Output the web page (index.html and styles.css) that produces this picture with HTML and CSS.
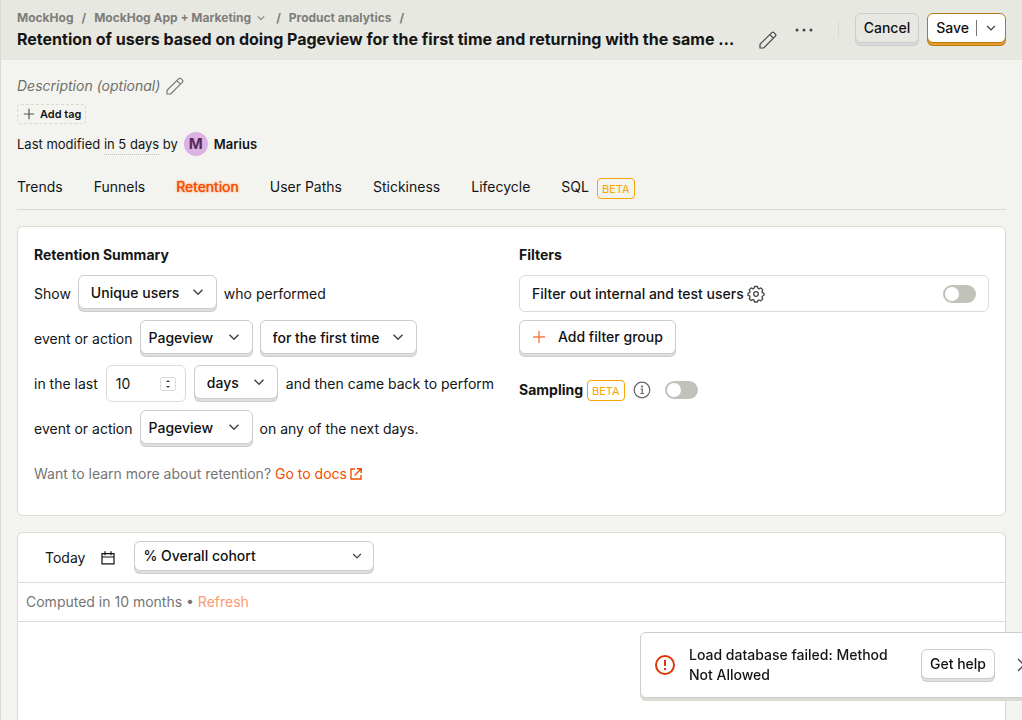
FILE: index.html
```html
<!DOCTYPE html>
<html lang="en">
<head>
<meta charset="utf-8">
<meta name="viewport" content="width=device-width, initial-scale=1">
<title>Retention insight • MockHog</title>
<link rel="stylesheet" href="styles.css">
</head>
<body>
<svg class="sprite" aria-hidden="true">
  <symbol id="chevron" viewBox="0 0 14 14"><path d="M2.500 4.700 7 9.200 11.500 4.700" fill="none" stroke="currentColor" stroke-width="1.500"/></symbol>
  <symbol id="pencil" viewBox="0 0 18 18"><path d="M1 17v-3.800L12.800 1.600a1.500 1.500 0 0 1 2.100 0l1.500 1.500a1.500 1.500 0 0 1 0 2.100L4.800 17H1ZM10.800 3.600l3.600 3.600" fill="none" stroke="currentColor" stroke-width="1.200"/></symbol>
  <symbol id="plus" viewBox="0 0 14 14"><path d="M7 1v12M1 7h12" fill="none" stroke="currentColor" stroke-width="1.400"/></symbol>
</svg>
<div class="app">
  <header class="topbar">
    <div class="heading">
      <nav class="crumbs" aria-label="Breadcrumb">
        <a href="#">MockHog</a><span>/</span>
        <a href="#" class="crumb-menu">MockHog App + Marketing <svg class="icon-10"><use href="#chevron"/></svg></a><span>/</span>
        <a href="#">Product analytics</a><span>/</span>
      </nav>
      <div class="title-row">
        <h1>Retention of users based on doing Pageview for the first time and returning with the same event</h1>
        <button class="bare" aria-label="Edit title"><svg class="icon-18"><use href="#pencil"/></svg></button>
      </div>
    </div>
    <div class="actions">
      <button class="bare more" aria-label="More options"><svg class="icon-18" viewBox="0 0 18 18" fill="currentColor"><circle cx="2" cy="9" r="1.500"/><circle cx="9" cy="9" r="1.500"/><circle cx="16" cy="9" r="1.500"/></svg></button>
      <span class="divider"></span>
      <button class="btn small cancel">Cancel</button>
      <div class="btn small split">
        <button class="bare save">Save</button>
        <button class="bare save-menu" aria-label="More save options"><svg class="icon-12"><use href="#chevron"/></svg></button>
      </div>
    </div>
  </header>

  <main class="content">
    <div class="description"><em>Description (optional)</em><button class="bare" aria-label="Edit description"><svg class="icon-18"><use href="#pencil"/></svg></button></div>
    <button class="tag-add"><svg class="icon-12"><use href="#plus"/></svg>Add tag</button>
    <div class="modified">
      <span>Last modified <span class="date">in 5 days</span> by</span>
      <span class="avatar">M</span>
      <strong>Marius</strong>
    </div>

    <nav class="tabs" aria-label="Insight type">
      <a href="#">Trends</a>
      <a href="#">Funnels</a>
      <a href="#" class="active" aria-current="page">Retention</a>
      <a href="#">User Paths</a>
      <a href="#">Stickiness</a>
      <a href="#">Lifecycle</a>
      <a href="#">SQL<span class="beta">BETA</span></a>
    </nav>

    <section class="card editor">
      <div class="column">
        <h2>Retention Summary</h2>
        <div class="row">
          <label for="aggregation">Show</label>
          <span class="picker wide"><select id="aggregation" class="btn"><option>Unique users</option></select><svg class="icon-14"><use href="#chevron"/></svg></span>
          <span>who performed</span>
        </div>
        <div class="row">
          <label for="target">event or action</label>
          <span class="picker event"><select id="target" class="btn"><option>Pageview</option></select><svg class="icon-14"><use href="#chevron"/></svg></span>
          <span class="picker wide"><select class="btn" aria-label="Occurrence"><option>for the first time</option></select><svg class="icon-14"><use href="#chevron"/></svg></span>
        </div>
        <div class="row periods">
          <label for="periods">in the last</label>
          <span class="number"><input id="periods" type="number" value="10"><svg class="spinner" viewBox="0 0 16 14"><rect x=".5" y=".5" width="15" height="13" rx="2" fill="#fff" stroke="#dcdcda"/><path d="m6 5 2-2 2 2zM6 9l2 2 2-2z" fill="#444"/></svg></span>
          <span class="picker"><select class="btn" aria-label="Period"><option>days</option></select><svg class="icon-14"><use href="#chevron"/></svg></span>
          <span>and then came back to perform</span>
        </div>
        <div class="row">
          <label for="returning">event or action</label>
          <span class="picker event"><select id="returning" class="btn"><option>Pageview</option></select><svg class="icon-14"><use href="#chevron"/></svg></span>
          <span>on any of the next days.</span>
        </div>
        <p class="row learn">
          <span>Want to learn more about retention? <a href="#">Go to docs<svg class="icon-14" viewBox="0 0 14 14" fill="none" stroke="currentColor" stroke-width="1.400"><path d="M6 2H2v10h10V8M8 1.700h4.300V6M12 2 5.500 8.500"/></svg></a></span>
        </p>
      </div>
      <div class="column">
        <h2>Filters</h2>
        <div class="filter-box">
          <label for="internal">Filter out internal and test users</label>
          <button class="bare" aria-label="Configure internal users"><svg class="icon-18" viewBox="0 0 18 18" fill="none" stroke="currentColor" stroke-width="1.300" stroke-linejoin="round"><path d="M7.600 1.500h2.800l.6 1.900 1 .4 1.800-.9 2 2-.9 1.800.4 1 1.700.6v2l-1.700.9-.4 1 .9 1.700-2 2-1.800-.9-1 .4-.6 1.600H7.600L7 15l-1-.4-1.800.9-2-2 .9-1.700-.4-1L1 10.300v-2l1.700-.6.4-1-.9-1.800 2-2 1.800.9 1-.4z"/><circle cx="9" cy="9" r="2.300"/></svg></button>
          <input id="internal" class="toggle" type="checkbox" role="switch">
        </div>
        <button class="btn add-filter"><svg class="icon-14"><use href="#plus"/></svg>Add filter group</button>
        <div class="sampling">
          <label for="sampling">Sampling</label>
          <span class="beta">BETA</span>
          <svg class="icon-18 info" viewBox="0 0 18 18" fill="none" stroke="currentColor" stroke-width="1.200"><circle cx="9" cy="9" r="7.800"/><path d="M7.500 8h1.800v4.500M7.300 12.500h3.600"/><circle cx="9" cy="5.500" r=".5" fill="currentColor"/></svg>
          <input id="sampling" class="toggle" type="checkbox" role="switch">
        </div>
      </div>
    </section>

    <section class="card results">
      <div class="results-bar">
        <button class="bare today">Today<svg class="icon-14" viewBox="0 0 14 14" fill="none" stroke="currentColor" stroke-width="1.200"><path d="M1 2.600h12v10.300H1zM1 6h12M4 .3v4M10 .3v4"/></svg></button>
        <span class="picker cohort"><select class="btn small" aria-label="Cohort reference"><option>% Overall cohort</option></select><svg class="icon-12"><use href="#chevron"/></svg></span>
      </div>
      <div class="computed">Computed in 10 months • <a href="#">Refresh</a></div>
    </section>
  </main>
</div>

<div class="toast" role="alert">
  <svg class="toast-icon" viewBox="0 0 20 20" fill="none" stroke="currentColor" stroke-width="2"><circle cx="10" cy="10" r="9"/><path d="M10 5v6M10 13v2"/></svg>
  <p>Load database failed: Method Not Allowed</p>
  <button class="btn small">Get help</button>
  <button class="bare" aria-label="Close"><svg class="icon-18" viewBox="0 0 18 18" fill="none" stroke="currentColor" stroke-width="1.400"><path d="m3 3 12 12M15 3 3 15"/></svg></button>
</div>
</body>
</html>
```

FILE: styles.css
```css
* { box-sizing: border-box; }

body {
  margin: 0;
  background: #f3f4ef;
  color: #151515;
  font: 14px/20px Inter, "Liberation Sans", sans-serif;
}

h1, h2, p { margin: 0; }
a { color: inherit; text-decoration: none; }
svg { display: block; flex: none; }
button, select, input { font: inherit; color: inherit; margin: 0; }
button { cursor: pointer; }

.sprite { position: absolute; width: 0; height: 0; }
.icon-10 { width: 10px; height: 10px; }
.icon-12 { width: 12px; height: 12px; }
.icon-14 { width: 14px; height: 14px; }
.icon-18 { width: 18px; height: 18px; }

.app {
  min-height: 100vh;
  display: flex;
  flex-direction: column;
  border-left: 1px solid #dadbd2;
}

.bare {
  display: flex;
  align-items: center;
  padding: 0;
  border: 0;
  background: none;
  color: #454545;
}

/* Raised control: the shadows draw a 3px base under the face */
.btn {
  height: 34px;
  margin-bottom: 3px;
  padding: 0 12px;
  border: 1px solid #cccccc;
  border-radius: 6px;
  background: #fff;
  box-shadow: 0 3px 0 -1px #e1dde0, 0 3px 0 #cccccc;
  color: #111;
  font-weight: 500;
  white-space: nowrap;
}
.btn.small { height: 30px; padding: 0 8px; }

/* Top bar */
.topbar {
  display: flex;
  gap: 8px;
  padding: 8px 16px 9px;
  border-bottom: 1px solid #e3e4dd;
  background: #e8e8e2;
}
.heading { flex: 1; min-width: 0; }
.crumbs {
  display: flex;
  gap: 8px;
  color: #7d7d79;
  font-size: 12px;
  font-weight: 700;
}
.crumb-menu { display: flex; align-items: center; gap: 5px; margin-right: 2px; }
.title-row { display: flex; align-items: center; gap: 16px; padding-right: 6px; }
.title-row h1 {
  flex: 1;
  overflow: hidden;
  font-size: 16px;
  line-height: 22px;
  font-weight: 700;
  text-overflow: ellipsis;
  white-space: nowrap;
}
.actions { display: flex; align-items: center; gap: 8px; padding-top: 1px; }
.title-row .bare { padding-top: 2px; }
.more { width: 26px; justify-content: center; }
.divider { width: 1px; height: 16px; margin: 0 8px 0 13px; background: #d9d9d4; }
.cancel { background: #e8e8e2; box-shadow: 0 3px 0 -1px #dcd9dc, 0 3px 0 #cccccc; }
.split {
  display: flex;
  align-items: center;
  border-color: #b17816;
  box-shadow: 0 3px 0 -1px #eb9d2a, 0 3px 0 #b17816;
}
.save { padding-right: 7px; color: #111; font-weight: 500; line-height: 16px; border-right: 1px solid #777; }
.save-menu { padding: 2px 0 2px 8px; }

/* Insight details */
.content { flex: 1; display: flex; flex-direction: column; padding: 16px 16px 0; }
.description { display: flex; gap: 6px; color: #6f6f6b; }
.description .bare { color: #777; }
.tag-add {
  align-self: flex-start;
  display: flex;
  align-items: center;
  gap: 5px;
  height: 20px;
  margin-top: 8px;
  padding: 0 4px 0 5px;
  border: 1px dashed #d8d9d0;
  border-radius: 4px;
  background: none;
  font-size: 11px;
  font-weight: 600;
}
.tag-add svg { color: #555; }
.modified { display: flex; align-items: center; gap: 6px; margin-top: 8px; font-size: 13px; }
.modified strong { font-weight: 600; }
.date { padding-bottom: 2px; border-bottom: 1px dotted #bbb; }
.avatar {
  width: 24px;
  border-radius: 50%;
  background: #dcb1e3;
  color: #572b5e;
  font-size: 15px;
  font-weight: 700;
  line-height: 24px;
  text-align: center;
}

.tabs {
  display: flex;
  gap: 31px;
  margin-top: 20px;
  padding-bottom: 10px;
  border-bottom: 1px solid #dadbd2;
  line-height: 22px;
}
.tabs a { display: flex; gap: 8px; }
.active { color: #f54e00; text-shadow: 0 0 1px #f54e00, 0 0 3px #ffb08a; }
.beta {
  height: 21px;
  margin-top: 2px;
  padding: 0 4px;
  border: 1px solid #f7a501;
  border-radius: 4px;
  color: #f7a501;
  font-size: 11px;
  line-height: 20px;
}

/* Cards */
.card { margin-top: 16px; border: 1px solid #dadbd2; border-radius: 6px; background: #fff; }
.editor { display: grid; grid-template-columns: 1fr 1fr; gap: 15px; padding: 16px 16px 23px; }
.column { display: flex; flex-direction: column; gap: 8px; min-width: 0; }
.column h2 { font-size: 14px; line-height: 24px; font-weight: 700; }
.row { display: flex; align-items: center; gap: 7px; min-height: 37px; white-space: nowrap; }
.periods { gap: 8px; }
.picker { position: relative; display: flex; }
.picker select { appearance: none; padding-top: 2px; padding-right: 38px; }
.picker svg { position: absolute; top: 10px; right: 12px; color: #454545; pointer-events: none; }
.wide select { padding-right: 36px; }
.event select { padding-left: 8px; }
.number {
  display: flex;
  align-items: center;
  width: 80px;
  height: 37px;
  padding: 0 9px;
  border: 1px solid #dadbd2;
  border-radius: 6px;
}
.number input {
  flex: 1;
  min-width: 0;
  padding: 0;
  border: 0;
  background: none;
  appearance: textfield;
}
.number input::-webkit-inner-spin-button { display: none; }
.spinner { width: 16px; height: 14px; }
.learn { color: #757575; }
.learn a { color: #f54e00; }
.learn svg { display: inline-block; margin-left: 2px; vertical-align: -2px; }

.filter-box {
  display: flex;
  align-items: center;
  gap: 3px;
  height: 37px;
  padding: 0 12px;
  border: 1px solid #dadbd2;
  border-radius: 6px;
  font-weight: 500;
}
.toggle {
  appearance: none;
  display: flex;
  align-items: center;
  width: 33px;
  height: 18px;
  padding: 2px;
  border-radius: 9px;
  background: #c1c2b9;
}
.toggle::before { content: ""; width: 14px; height: 14px; border-radius: 50%; background: #fff; }
.toggle:checked { justify-content: flex-end; background: #f54e00; }
.filter-box .toggle { margin-left: auto; }
.add-filter { align-self: flex-start; display: flex; align-items: center; gap: 12px; }
.add-filter svg { color: #f97a45; }
.sampling { display: flex; align-items: center; gap: 4px; height: 26px; margin-top: 12px; }
.sampling label { font-weight: 700; }
.sampling .beta { margin-top: 0; }
.info { margin: 0 10px 0 4px; color: #666; }

.results { flex: 1; border-bottom: 0; border-radius: 6px 6px 0 0; }
.results-bar { display: flex; gap: 8px; padding: 8px 16px; border-bottom: 1px solid #dadbd2; }
.today { gap: 16px; padding: 0 11px; color: #151515; }
.cohort select { width: 240px; }
.cohort svg { top: 9px; right: 11px; }
.computed { padding: 9px 8px; border-bottom: 1px solid #dadbd2; color: #757575; }
.computed a { color: #f99a70; }

.toast {
  position: fixed;
  right: -18px;
  bottom: 22px;
  display: flex;
  align-items: center;
  width: 400px;
  padding: 12px 6px 12px 14px;
  border: 1px solid #cccccc;
  border-radius: 6px;
  background: #fff;
  box-shadow: 0 3px 0 #dadbd2;
  font-weight: 500;
}
.toast-icon { width: 20px; height: 20px; color: #db3707; }
.toast p { flex: 1; margin: 0 20px 0 14px; }
.toast .bare { margin-left: 20px; }
```
